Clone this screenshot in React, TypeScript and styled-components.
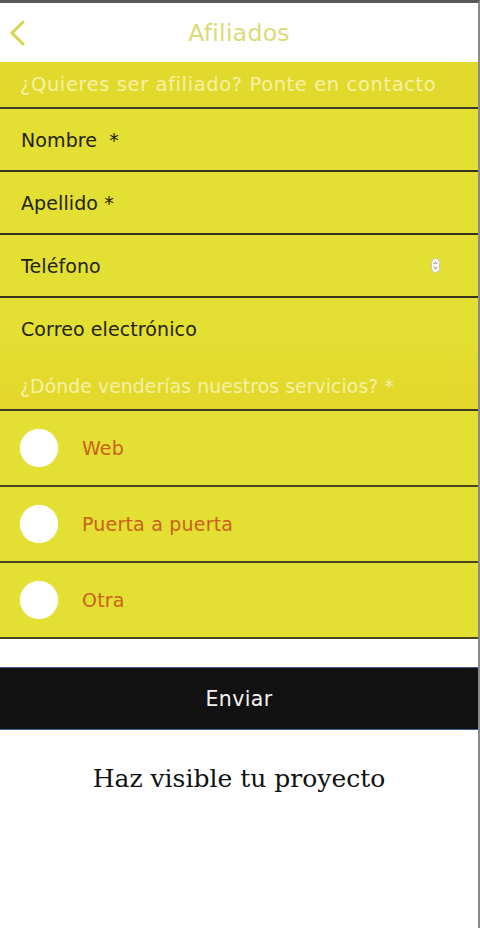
import React from 'react';
import styled, { createGlobalStyle } from 'styled-components';

const GlobalStyle = createGlobalStyle`
  html, body {
    margin: 0;
    padding: 0;
    background: #fff;
  }
  * {
    box-sizing: border-box;
  }
`;

const Page = styled.div`
  width: 480px;
  min-height: 928px;
  border-top: 3px solid #595959;
  border-right: 2px solid #8a8a8a;
  background: #fff;
  font-family: 'DejaVu Sans', Inter, sans-serif;
`;

const Header = styled.header`
  height: 59px;
  display: flex;
  align-items: center;
  padding: 0 0 0 8px;
`;

const BackButton = styled.button`
  border: 0;
  background: none;
  padding: 0;
  width: 24px;
  height: 30px;
  display: flex;
  align-items: center;
  cursor: pointer;
`;

const Title = styled.h1`
  flex: 1;
  margin: 0 32px 0 0;
  text-align: center;
  font-size: 23.5px;
  font-weight: 400;
  letter-spacing: 0.3px;
  color: #dadb74;
`;

const Band = styled.div<{ $height: number; $fade?: boolean; $size: number; $spacing: number }>`
  height: ${(p) => p.$height}px;
  display: flex;
  align-items: center;
  padding: ${(p) => (p.$fade ? '3px 20px 0' : '0 20px')};
  background: ${(p) => (p.$fade ? 'linear-gradient(#e3dc2e, #e3d72a)' : '#e2d92d')};
  border-bottom: 2px solid #3b3b28;
  color: #f6f1a6;
  font-size: ${(p) => p.$size}px;
  letter-spacing: ${(p) => p.$spacing}px;
  white-space: nowrap;
`;

const Field = styled.label<{ $last?: boolean }>`
  height: ${(p) => (p.$last ? 62 : 63)}px;
  display: flex;
  align-items: center;
  padding: 0 38px 0 21px;
  background: ${(p) => (p.$last ? 'linear-gradient(#e3df33 70%, #e3dc2e)' : '#e3df33')};
  border-bottom: ${(p) => (p.$last ? '0' : '2px solid #33331f')};
`;

const Input = styled.input`
  flex: 1;
  min-width: 0;
  border: 0;
  outline: 0;
  background: transparent;
  font-family: inherit;
  font-size: 19px;
  letter-spacing: 0.1px;
  color: #23230c;
  padding: 0;

  &::placeholder {
    color: #23230c;
    opacity: 1;
  }
`;

const Spinner = styled.span`
  display: flex;
  width: 9px;
  height: 15px;
`;

const Option = styled.label`
  height: 76px;
  display: flex;
  align-items: center;
  gap: 24px;
  padding: 0 20px;
  background: #e3df33;
  border-bottom: 2px solid #4a4420;
  color: #c9621c;
  font-size: 19px;
  letter-spacing: 0.2px;
  cursor: pointer;
`;

const Radio = styled.span`
  width: 38px;
  height: 38px;
  border-radius: 50%;
  background: #fff;
  box-shadow: 0 0 1px rgba(255, 255, 255, 0.8);
  flex-shrink: 0;
`;

const Gap = styled.div`
  height: 28px;
`;

const SubmitButton = styled.button`
  width: 100%;
  height: 63px;
  border: 0;
  border-top: 1px solid #3d5f95;
  border-bottom: 1px solid #3d5f95;
  background: #121212;
  color: #f2f2f2;
  font-family: 'DejaVu Sans', Inter, sans-serif;
  font-size: 20.5px;
  letter-spacing: 0.4px;
  cursor: pointer;
`;

const Tagline = styled.h2`
  margin: 34px 0 0;
  text-align: center;
  font-family: 'DejaVu Serif', 'Liberation Serif', serif;
  font-size: 25px;
  font-weight: 400;
  color: #111;
`;

const options = ['Web', 'Puerta a puerta', 'Otra'];

export default function App() {
  return (
    <>
      <GlobalStyle />
      <Page>
        <Header>
          <BackButton aria-label='Volver'>
            <svg width='18' height='26' viewBox='0 0 18 26'>
              <path d='M15 2 L4 13 L15 24' fill='none' stroke='#d5d64e' strokeWidth='3' strokeLinecap='round' strokeLinejoin='round' />
            </svg>
          </BackButton>
          <Title>Afiliados</Title>
        </Header>

        <Band $height={47} $size={19.5} $spacing={0.6}>
          ¿Quieres ser afiliado? Ponte en contacto
        </Band>

        <Field>
          <Input placeholder='Nombre  *' />
        </Field>
        <Field>
          <Input placeholder='Apellido *' />
        </Field>
        <Field>
          <Input placeholder='Teléfono' />
          <Spinner>
            <svg width='9' height='15' viewBox='0 0 9 15'>
              <rect x='0.5' y='0.5' width='8' height='14' rx='4' fill='#fff' stroke='#c9c9a0' />
              <path d='M2.7 6 L4.5 4.2 L6.3 6 M2.7 9 L4.5 10.8 L6.3 9' fill='none' stroke='#555' strokeWidth='0.9' />
            </svg>
          </Spinner>
        </Field>
        <Field $last>
          <Input placeholder='Correo electrónico' />
        </Field>

        <Band $height={51} $fade $size={18.8} $spacing={0.1}>
          ¿Dónde venderías nuestros servicios? *
        </Band>

        {options.map((opt) => (
          <Option key={opt}>
            <Radio />
            {opt}
          </Option>
        ))}

        <Gap />
        <SubmitButton>Enviar</SubmitButton>
        <Tagline>Haz visible tu proyecto</Tagline>
      </Page>
    </>
  );
}
